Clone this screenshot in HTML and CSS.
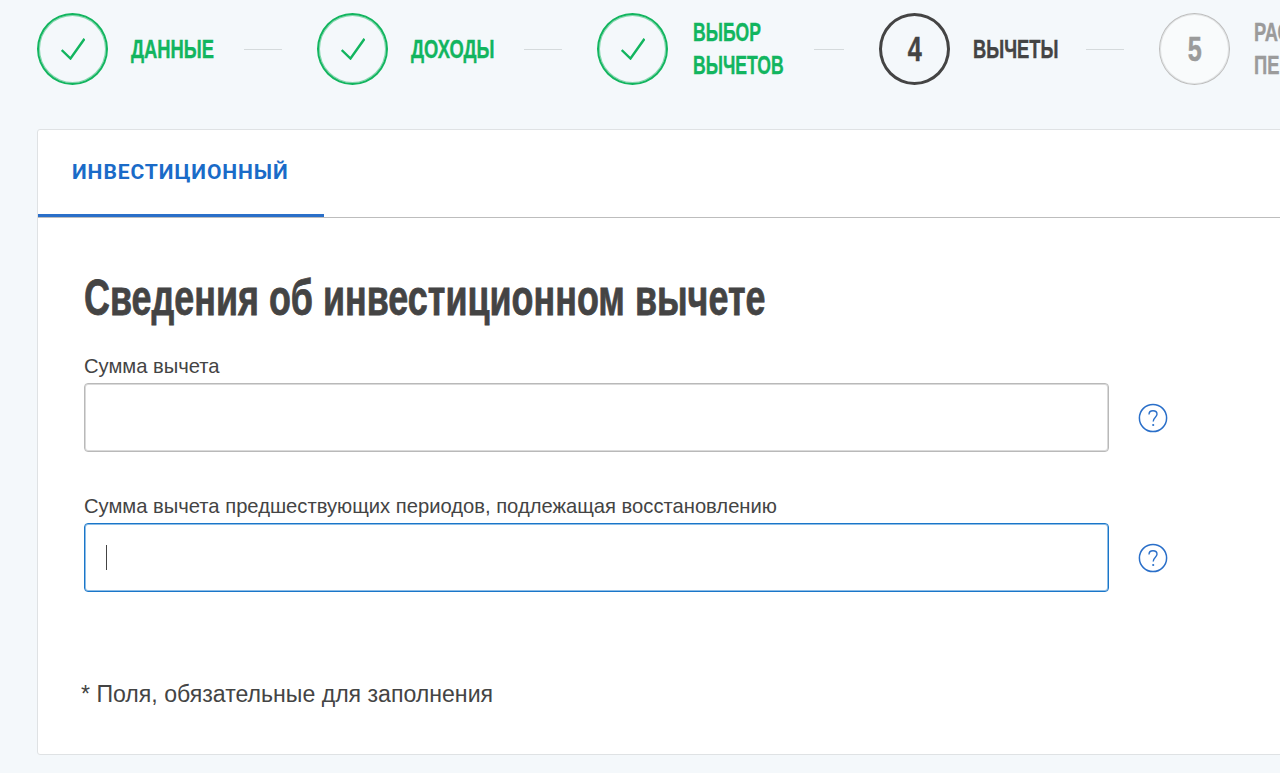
FILE: index.html
```html
<!DOCTYPE html>
<html lang="ru">
<head>
<meta charset="utf-8">
<title>Вычеты</title>
<link rel="stylesheet" href="styles.css">
</head>
<body>
<div class="page">
  <nav class="stepper">
    <div class="step done">
      <span class="circle"><svg class="check" viewBox="0 0 24 22" width="24" height="22"><path d="M0.7 12 L9.5 20.5 L23.5 0.8" fill="none" stroke="currentColor" stroke-width="2.4"/></svg></span>
      <span class="label"><span class="cond">ДАННЫЕ</span></span>
    </div>
    <span class="line"></span>
    <div class="step done">
      <span class="circle"><svg class="check" viewBox="0 0 24 22" width="24" height="22"><path d="M0.7 12 L9.5 20.5 L23.5 0.8" fill="none" stroke="currentColor" stroke-width="2.4"/></svg></span>
      <span class="label"><span class="cond">ДОХОДЫ</span></span>
    </div>
    <span class="line"></span>
    <div class="step done">
      <span class="circle"><svg class="check" viewBox="0 0 24 22" width="24" height="22"><path d="M0.7 12 L9.5 20.5 L23.5 0.8" fill="none" stroke="currentColor" stroke-width="2.4"/></svg></span>
      <span class="label wide"><span class="cond tight">ВЫБОР<br>ВЫЧЕТОВ</span></span>
    </div>
    <span class="line short"></span>
    <div class="step current">
      <span class="circle"><span class="digit">4</span></span>
      <span class="label"><span class="cond">ВЫЧЕТЫ</span></span>
    </div>
    <span class="line"></span>
    <div class="step todo">
      <span class="circle"><span class="digit">5</span></span>
      <span class="label last"><span class="cond">РАСЧЕТ<br>ПЕРИОДА</span></span>
    </div>
  </nav>
  <section class="card">
    <div class="tabs"><div class="tab">ИНВЕСТИЦИОННЫЙ</div></div>
    <div class="body">
      <h1 class="title">Сведения об инвестиционном вычете</h1>
      <div class="field">
        <label class="field-label">Сумма вычета</label>
        <div class="field-row">
          <div class="input"></div>
          <svg class="help" viewBox="0 0 30 30" width="30" height="30"><circle cx="15" cy="15" r="13.6" fill="none" stroke="currentColor" stroke-width="1.5"/><path d="M11 11.5 C11 9 13 7.8 15 7.8 C17.2 7.8 19 9.2 19 11.3 C19 14 15.2 14.5 15.2 18.5" fill="none" stroke="currentColor" stroke-width="1.4"/><circle cx="15.2" cy="22" r="1.1" fill="currentColor"/></svg>
        </div>
      </div>
      <div class="field">
        <label class="field-label">Сумма вычета предшествующих периодов, подлежащая восстановлению</label>
        <div class="field-row">
          <div class="input focused"><span class="caret"></span></div>
          <svg class="help" viewBox="0 0 30 30" width="30" height="30"><circle cx="15" cy="15" r="13.6" fill="none" stroke="currentColor" stroke-width="1.5"/><path d="M11 11.5 C11 9 13 7.8 15 7.8 C17.2 7.8 19 9.2 19 11.3 C19 14 15.2 14.5 15.2 18.5" fill="none" stroke="currentColor" stroke-width="1.4"/><circle cx="15.2" cy="22" r="1.1" fill="currentColor"/></svg>
        </div>
      </div>
      <p class="note">* Поля, обязательные для заполнения</p>
    </div>
  </section>
</div>
</body>
</html>
```
FILE: styles.css
```css
* { box-sizing: border-box; }
html, body { margin: 0; height: 100%; overflow: hidden; }
body { background: #f4f8fb; font-family: "Liberation Sans", Arial, sans-serif; color: #444; }
.page { width: 1400px; padding: 13px 0 0 37px; }
.stepper { display: flex; align-items: center; height: 72px; }
.step { display: flex; align-items: center; flex: none; }
.circle {
  width: 71px; height: 72px; border-radius: 50%; border: 2px solid currentColor;
  display: flex; align-items: center; justify-content: center; flex: none;
}
.done .circle { box-shadow: inset 0 0 0 1px rgba(18, 181, 95, .5); }
.digit {
  display: inline-block; transform: scaleX(.72); font-weight: 700; font-size: 35px; line-height: 40px;
  -webkit-text-stroke: .5px currentColor;
}
.label {
  margin-left: 23px; font-weight: 700; font-size: 26px; line-height: 33px; width: 83px; white-space: nowrap;
}
.cond { display: inline-block; transform: scaleX(.706); transform-origin: left center; -webkit-text-stroke: .4px currentColor; }
.cond.tight { transform: scaleX(.676); }
.label.wide { margin-left: 25px; width: 90px; }
.label.last { margin-left: 24px; }
.done { color: #12b55f; }
.current { color: #444; }
.current .circle { border-width: 3px; }
.todo { color: #9b9b9b; }
.todo .circle { border: 1px solid #bdbdbd; background: #f9fbfc; box-shadow: inset 0 0 0 1px #e2e4e5; }
.line { width: 38px; height: 1px; background: #d5dadc; margin: 0 35px 0 30px; flex: none; }
.line.short { width: 30px; margin: 0 35px 0 31px; }
.card {
  margin-top: 44px; height: 626px; background: #fff; border: 1px solid #dfe2e4; border-radius: 3px 0 0 3px;
}
.tabs { height: 88px; border-bottom: 1px solid #bdbdbd; }
.tab {
  width: 286px; height: 87px; border-bottom: 3px solid #2a6fc9; padding: 29px 0 0 34px;
  color: #1a6bc8; font-family: Roboto, sans-serif; font-weight: 700; font-size: 21px; line-height: 26px; letter-spacing: .93px;
}
.body { padding: 48px 0 0 46px; }
.title {
  margin: 0; font-weight: 700; font-size: 50px; line-height: 64px; color: #444; white-space: nowrap;
  transform: scaleX(.718); transform-origin: left center; -webkit-text-stroke: .8px #444;
}
.field { margin-top: 24px; }
.field + .field { margin-top: 42px; }
.field-label { display: block; font-size: 20.2px; line-height: 24px; color: #444; margin-bottom: 5px; }
.field-row { display: flex; align-items: center; }
.input {
  width: 1025px; height: 69px; background: #fff; border: 1px solid #b9b9b9; border-radius: 4px; flex: none; position: relative;
  box-shadow: inset 0 0 0 1px #dadada;
}
.input.focused { border-color: #1a76c9; box-shadow: inset 0 0 0 1px #8dbde6; }
.caret { position: absolute; left: 21px; top: 21px; width: 1px; height: 25px; background: #444; }
.help { margin-left: 29px; color: #2a6fc9; flex: none; }
.note { margin: 88px 0 0 -3px; font-size: 23.1px; line-height: 28px; color: #444; }
```
